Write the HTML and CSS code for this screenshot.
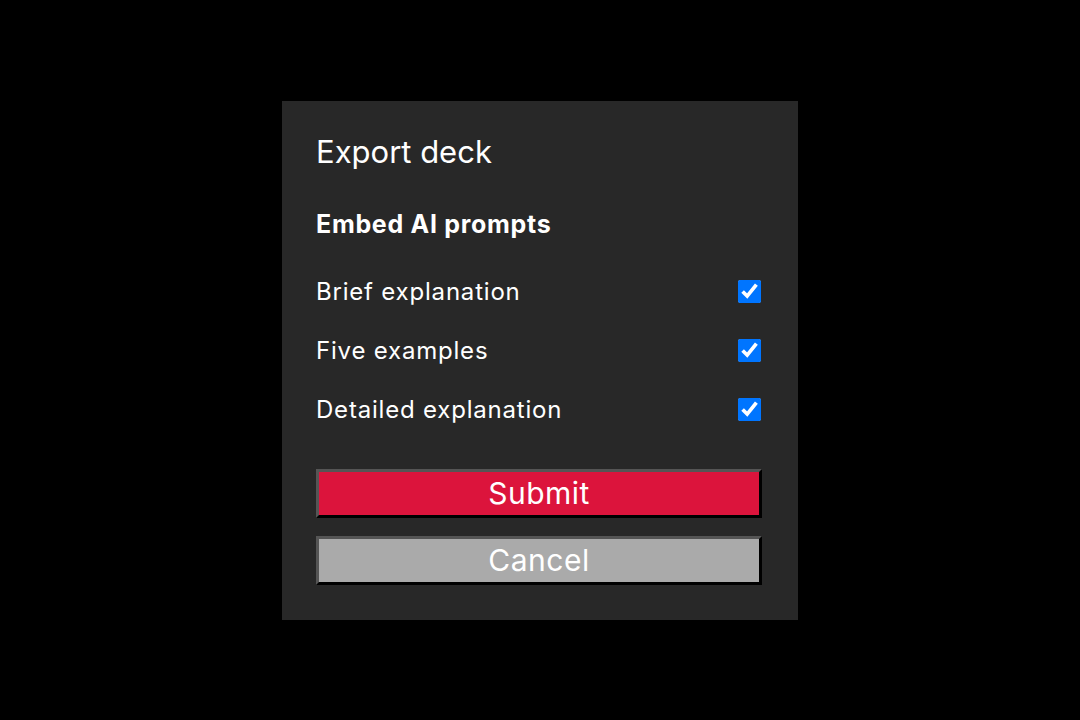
FILE: index.html
```html
<!DOCTYPE html>
<html lang="en">
<head>
  <meta charset="UTF-8" />
  <title>Export deck</title>
  <link rel="stylesheet" href="styles.css">
</head>
<body>

<div class="dialog">
  <h2 class="dialog-title">Export deck</h2>
  <form class="export-form">
    <h3 class="section-title">Embed AI prompts</h3>

    <label class="option">
      <span>Brief explanation</span>
      <input type="checkbox" name="brief" checked />
    </label>
    <label class="option">
      <span>Five examples</span>
      <input type="checkbox" name="examples" checked />
    </label>
    <label class="option">
      <span>Detailed explanation</span>
      <input type="checkbox" name="detailed" checked />
    </label>

    <div class="actions">
      <button type="submit" class="btn btn-submit">Submit</button>
      <button type="button" class="btn btn-cancel">Cancel</button>
    </div>
  </form>
</div>

</body>
</html>
```

FILE: styles.css
```css
html, body {
  height: 100%;
}
body {
  margin: 0;
  background: #000;
  font-family: Inter, "Noto Sans", Arial, sans-serif;
  display: flex;
  align-items: center;
  justify-content: center;
}
.dialog {
  width: 516px;
  box-sizing: border-box;
  padding: 31px 36px 35px 34px;
  background: #282828;
  color: #fff;
}
.dialog-title {
  font-size: 31px;
  font-weight: 400;
  margin: 0 0 37px;
  line-height: 40px;
}
.section-title {
  font-size: 25px;
  font-weight: 700;
  letter-spacing: 0.7px;
  margin: 0 0 23px;
  line-height: 30px;
}
.option {
  display: flex;
  align-items: center;
  justify-content: space-between;
  font-size: 24px;
  letter-spacing: 0.8px;
  height: 59px;
}
.option input {
  width: 23px;
  height: 23px;
  margin: 0 1px 0 0;
  accent-color: #0075ff;
}
.actions {
  margin-top: 30px;
  display: flex;
  flex-direction: column;
  gap: 18px;
}
.btn {
  display: block;
  width: 100%;
  height: 49px;
  padding: 0;
  font-family: inherit;
  font-size: 30px;
  letter-spacing: 0.5px;
  color: #fff;
  border: 3px solid;
  border-color: #555 #000 #000 #555;
  cursor: pointer;
}
.btn-submit {
  background: #dc143c;
}
.btn-cancel {
  background: #aaa;
}
```
